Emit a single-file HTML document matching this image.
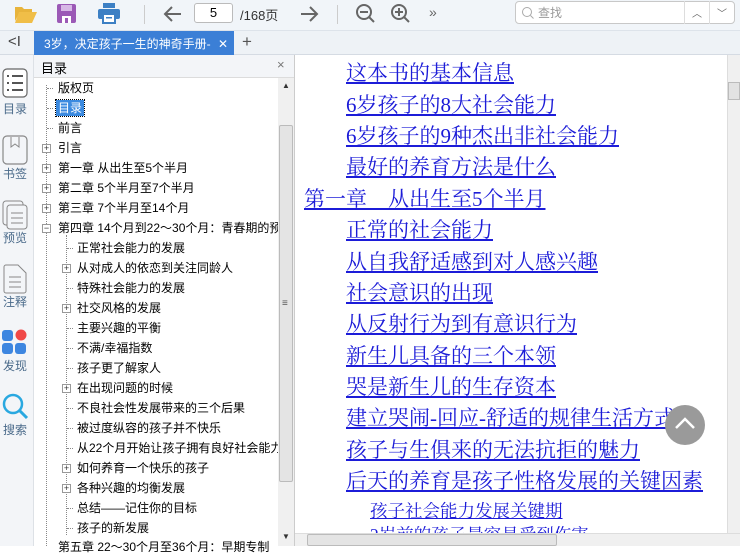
<!DOCTYPE html>
<html><head><meta charset="utf-8"><style>
*{margin:0;padding:0;box-sizing:border-box}
body{width:740px;height:546px;overflow:hidden;background:#fff;font-family:"Liberation Sans","Noto Sans CJK SC",sans-serif;position:relative}
.a{position:absolute}
#tb{left:0;top:0;width:740px;height:30px;background:#f1f5f9}
#tabs{left:0;top:30px;width:740px;height:25px;background:#eef2f6;border-top:1px solid #dde3ea;border-bottom:1px solid #d5dbe3}
#side{left:0;top:55px;width:34px;height:491px;background:#f3f5f8;border-right:1px solid #dde1e6}
.sl{position:absolute;left:0;width:30px;text-align:center;font-size:12px;color:#4a6a8a}
#toc{left:34px;top:55px;width:261px;height:491px;background:#fff;border-right:1px solid #ccc}
#toch{left:0;top:0;width:260px;height:23px;background:#f3f5f8;border-bottom:1px solid #dcdcdc;font-size:13px;padding:3px 0 0 7px}
.r{position:absolute;font-size:12px;color:#000;white-space:nowrap;line-height:16px}
.pb{position:absolute;width:9px;height:9px;border:1px solid #999;background:#fff;font-size:9px;line-height:7px;text-align:center;color:#333}
.dl{position:absolute;border-top:1px dotted #888;width:6px}
.c{position:absolute;font-family:"Liberation Serif","Noto Serif CJK SC",serif;font-size:21px;color:#1c1cd8;text-decoration:underline;white-space:nowrap;line-height:24px}
</style></head><body>
<div id="tb" class="a">
<svg class="a" style="left:14px;top:4px" width="24" height="20"><path d="M1 3h7l2 2h8v3H6L1 17z" fill="#e8b43c"/><path d="M5 8h18l-5 11H1z" fill="#f0be48"/></svg>
<svg class="a" style="left:57px;top:4px" width="19" height="19"><rect x="0" y="0" width="19" height="19" rx="2" fill="#9b59b6"/><rect x="4" y="1" width="11" height="6" fill="#d7b8e6"/><rect x="5" y="12" width="9" height="7" fill="#fff"/><rect x="8" y="14" width="3" height="5" fill="#9b59b6"/></svg>
<svg class="a" style="left:98px;top:3px" width="22" height="21"><rect x="5" y="0" width="12" height="5" fill="#3d80c4"/><rect x="0" y="6" width="22" height="10" rx="2" fill="#3d80c4"/><rect x="5" y="11" width="12" height="9" fill="#fff" stroke="#3d80c4" stroke-width="2"/><rect x="8" y="14" width="6" height="1.5" fill="#3d80c4"/></svg>
<div class="a" style="left:144px;top:5px;width:1px;height:19px;background:#ccc"></div>
<svg class="a" style="left:163px;top:5px" width="20" height="18"><path d="M18 9H2M9 2L2 9l7 7" stroke="#666" stroke-width="2" fill="none"/></svg>
<div class="a" style="left:194px;top:3px;width:39px;height:20px;border:1px solid #bbb;border-radius:3px;background:#fff;font-size:13px;text-align:center;line-height:18px">5</div>
<div class="a" style="left:240px;top:5px;font-size:13px;color:#333">/168页</div>
<svg class="a" style="left:299px;top:5px" width="20" height="18"><path d="M2 9h16M11 2l7 7-7 7" stroke="#666" stroke-width="2" fill="none"/></svg>
<div class="a" style="left:337px;top:5px;width:1px;height:19px;background:#ccc"></div>
<svg class="a" style="left:355px;top:3px" width="22" height="22"><circle cx="9" cy="9" r="7" stroke="#666" stroke-width="2" fill="none"/><path d="M14 14l5 5M5 9h8" stroke="#666" stroke-width="2"/></svg>
<svg class="a" style="left:390px;top:3px" width="22" height="22"><circle cx="9" cy="9" r="7" stroke="#666" stroke-width="2" fill="none"/><path d="M14 14l5 5M5 9h8M9 5v8" stroke="#666" stroke-width="2"/></svg>
<div class="a" style="left:429px;top:4px;font-size:14px;color:#666">»</div>
<div class="a" style="left:515px;top:1px;width:220px;height:23px;border:1px solid #c8c8c8;border-radius:4px;background:#fff"></div>
<svg class="a" style="left:521px;top:6px" width="14" height="14"><circle cx="6" cy="6" r="4.5" stroke="#aaa" fill="none"/><path d="M9.5 9.5l3 3" stroke="#aaa"/></svg>
<div class="a" style="left:538px;top:4px;font-size:12px;color:#999">查找</div>
<div class="a" style="left:684px;top:1px;width:1px;height:23px;background:#ddd"></div>
<div class="a" style="left:709px;top:1px;width:1px;height:23px;background:#ddd"></div>
<div class="a" style="left:692px;top:5px;font-size:10px;color:#666">︿</div>
<div class="a" style="left:717px;top:5px;font-size:10px;color:#666">﹀</div>
</div>
<div id="tabs" class="a">
<div class="a" style="left:8px;top:2px;font-size:15px;color:#444">&lt;I</div>
<div class="a" style="left:34px;top:0;width:200px;height:24px;background:#3b7fd6;color:#fff;font-size:12px;padding:4px 0 0 10px">3岁，决定孩子一生的神奇手册- <span style="margin-left:4px">✕</span></div>
<div class="a" style="left:242px;top:1px;font-size:17px;color:#555">+</div>
</div>
<div id="side" class="a">
<svg class="a" style="left:2px;top:13px" width="26" height="30"><rect x="1" y="1" width="24" height="28" rx="4" stroke="#666" stroke-width="1.2" fill="#fff"/><path d="M5 8h2M10 8h11M5 15h2M10 15h11M5 22h2M10 22h11" stroke="#555" stroke-width="2"/></svg>
<div class="sl" style="top:45px">目录</div>
<svg class="a" style="left:2px;top:80px" width="26" height="30"><rect x="1" y="1" width="24" height="28" rx="4" stroke="#888" stroke-width="1.2" fill="none"/><path d="M9 2v10l4-3 4 3V2" stroke="#888" fill="none"/></svg>
<div class="sl" style="top:110px">书签</div>
<svg class="a" style="left:2px;top:145px" width="26" height="30"><rect x="1" y="1" width="20" height="24" rx="3" stroke="#888" fill="none"/><rect x="5" y="5" width="20" height="24" rx="3" stroke="#888" fill="#f3f5f8"/><path d="M9 13h12M9 18h12M9 23h12" stroke="#888"/></svg>
<div class="sl" style="top:174px">预览</div>
<svg class="a" style="left:3px;top:209px" width="24" height="30"><path d="M1 3a2 2 0 0 1 2-2h12l8 8v18a2 2 0 0 1-2 2H3a2 2 0 0 1-2-2z" stroke="#888" fill="none"/><path d="M6 13h12M6 18h12M6 23h12" stroke="#888"/></svg>
<div class="sl" style="top:238px">注释</div>
<svg class="a" style="left:2px;top:274px" width="26" height="26"><rect x="0" y="1" width="11" height="11" rx="3" fill="#3d86e0"/><circle cx="19" cy="6" r="5.5" fill="#f04848"/><rect x="0" y="14" width="11" height="11" rx="3" fill="#3d86e0"/><rect x="13" y="14" width="11" height="11" rx="3" fill="#3d86e0"/></svg>
<div class="sl" style="top:302px">发现</div>
<svg class="a" style="left:2px;top:338px" width="28" height="28"><circle cx="11" cy="11" r="9" stroke="#29a8e0" stroke-width="2.5" fill="none"/><path d="M18 18l7 7" stroke="#29a8e0" stroke-width="3"/></svg>
<div class="sl" style="top:366px">搜索</div>
</div>
<div id="toc" class="a">
<div id="toch" class="a">目录<span style="position:absolute;left:243px;top:2px;color:#777">×</span></div>
<div class="a" style="left:12px;top:30px;height:461px;border-left:1px dotted #888"></div>
<div class="a" style="left:32px;top:180px;height:300px;border-left:1px dotted #888"></div>
<div class="a" style="left:244px;top:23px;width:16px;height:468px;background:#f0f0f0"></div>
<div class="a" style="left:245px;top:70px;width:14px;height:357px;background:#e4e4e4;border:1px solid #bbb;border-radius:2px"></div>
<div class="a" style="left:248px;top:26px;font-size:8px;color:#333">▲</div>
<div class="a" style="left:248px;top:243px;font-size:10px;color:#555">≡</div>
<div class="a" style="left:248px;top:477px;font-size:8px;color:#333">▼</div>
<div class="r" style="left:24px;top:25px">版权页</div><div class="dl" style="left:13px;top:33px"></div>
<div class="r" style="left:22px;top:45px;background:#3b8ae0;color:#fff;padding:0 2px;outline:1px dotted #000">目录</div><div class="dl" style="left:13px;top:53px"></div>
<div class="r" style="left:24px;top:65px">前言</div><div class="dl" style="left:13px;top:73px"></div>
<div class="pb" style="left:8px;top:89px">+</div><div class="r" style="left:24px;top:85px">引言</div>
<div class="pb" style="left:8px;top:109px">+</div><div class="r" style="left:24px;top:105px">第一章 从出生至5个半月</div>
<div class="pb" style="left:8px;top:129px">+</div><div class="r" style="left:24px;top:125px">第二章 5个半月至7个半月</div>
<div class="pb" style="left:8px;top:149px">+</div><div class="r" style="left:24px;top:145px">第三章 7个半月至14个月</div>
<div class="pb" style="left:8px;top:169px">−</div><div class="r" style="left:24px;top:165px;width:220px;overflow:hidden">第四章 14个月到22～30个月：青春期的预</div>
<div class="dl" style="left:33px;top:193px"></div><div class="r" style="left:43px;top:185px">正常社会能力的发展</div>
<div class="pb" style="left:28px;top:209px">+</div><div class="r" style="left:43px;top:205px">从对成人的依恋到关注同龄人</div>
<div class="dl" style="left:33px;top:233px"></div><div class="r" style="left:43px;top:225px">特殊社会能力的发展</div>
<div class="pb" style="left:28px;top:249px">+</div><div class="r" style="left:43px;top:245px">社交风格的发展</div>
<div class="dl" style="left:33px;top:273px"></div><div class="r" style="left:43px;top:265px">主要兴趣的平衡</div>
<div class="dl" style="left:33px;top:293px"></div><div class="r" style="left:43px;top:285px">不满/幸福指数</div>
<div class="dl" style="left:33px;top:313px"></div><div class="r" style="left:43px;top:305px">孩子更了解家人</div>
<div class="pb" style="left:28px;top:329px">+</div><div class="r" style="left:43px;top:325px">在出现问题的时候</div>
<div class="dl" style="left:33px;top:353px"></div><div class="r" style="left:43px;top:345px">不良社会性发展带来的三个后果</div>
<div class="dl" style="left:33px;top:373px"></div><div class="r" style="left:43px;top:365px">被过度纵容的孩子并不快乐</div>
<div class="dl" style="left:33px;top:393px"></div><div class="r" style="left:43px;top:385px;width:201px;overflow:hidden">从22个月开始让孩子拥有良好社会能力</div>
<div class="pb" style="left:28px;top:409px">+</div><div class="r" style="left:43px;top:405px">如何养育一个快乐的孩子</div>
<div class="pb" style="left:28px;top:429px">+</div><div class="r" style="left:43px;top:425px">各种兴趣的均衡发展</div>
<div class="dl" style="left:33px;top:453px"></div><div class="r" style="left:43px;top:445px">总结——记住你的目标</div>
<div class="dl" style="left:33px;top:473px"></div><div class="r" style="left:43px;top:465px">孩子的新发展</div>
<div class="r" style="left:24px;top:484px;width:220px;overflow:hidden">第五章 22～30个月至36个月：早期专制</div>
</div>
<div class="a" style="left:295px;top:55px;width:445px;height:491px;overflow:hidden">
<div class="c" style="left:51px;top:6px">这本书的基本信息</div>
<div class="c" style="left:51px;top:38px">6岁孩子的8大社会能力</div>
<div class="c" style="left:51px;top:69px">6岁孩子的9种杰出非社会能力</div>
<div class="c" style="left:51px;top:100px">最好的养育方法是什么</div>
<div class="c" style="left:9px;top:132px">第一章　从出生至5个半月</div>
<div class="c" style="left:51px;top:163px">正常的社会能力</div>
<div class="c" style="left:51px;top:195px">从自我舒适感到对人感兴趣</div>
<div class="c" style="left:51px;top:226px">社会意识的出现</div>
<div class="c" style="left:51px;top:257px">从反射行为到有意识行为</div>
<div class="c" style="left:51px;top:289px">新生儿具备的三个本领</div>
<div class="c" style="left:51px;top:320px">哭是新生儿的生存资本</div>
<div class="c" style="left:51px;top:351px">建立哭闹-回应-舒适的规律生活方式</div>
<div class="c" style="left:51px;top:383px">孩子与生俱来的无法抗拒的魅力</div>
<div class="c" style="left:51px;top:414px">后天的养育是孩子性格发展的关键因素</div>
<div class="c" style="left:75px;top:444px;font-size:17.5px">孩子社会能力发展关键期</div>
<div class="c" style="left:75px;top:468px;font-size:17.5px">2岁前的孩子最容易受到伤害</div>
<div class="a" style="left:370px;top:350px;width:40px;height:40px;border-radius:50%;background:#9a9a9a"></div>
<svg class="a" style="left:378px;top:360px" width="24" height="16"><path d="M3 13l9-9 9 9" stroke="#fff" stroke-width="2.5" fill="none"/></svg>
<div class="a" style="left:432px;top:0;width:13px;height:478px;background:#f0f0f0;border-left:1px solid #ddd"></div>
<div class="a" style="left:433px;top:27px;width:12px;height:18px;background:#e2e2e2;border:1px solid #bbb"></div>
<div class="a" style="left:0;top:478px;width:445px;height:13px;background:#f0f0f0;border-top:1px solid #ddd"></div>
<div class="a" style="left:12px;top:479px;width:250px;height:12px;background:#e4e4e4;border:1px solid #bbb;border-radius:2px"></div>
</div>
</body></html>
